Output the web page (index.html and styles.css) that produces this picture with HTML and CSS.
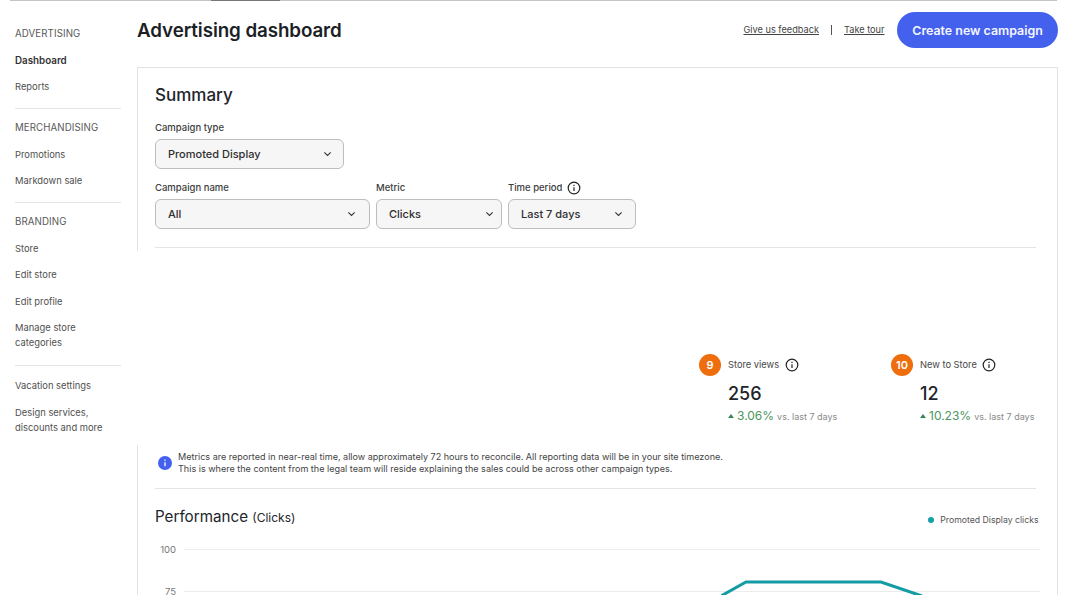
FILE: index.html
```html
<!DOCTYPE html>
<html lang="en">
<head>
<meta charset="utf-8">
<title>Advertising dashboard</title>
<link rel="stylesheet" href="styles.css">
</head>
<body>
<div class="topline"><span class="topline-thumb"></span></div>
<div class="page">
  <nav class="sidebar">
    <div class="nav-group">
      <div class="nav-head">ADVERTISING</div>
      <a class="nav-item nav-current">Dashboard</a>
      <a class="nav-item">Reports</a>
    </div>
    <div class="nav-group">
      <div class="nav-head">MERCHANDISING</div>
      <a class="nav-item">Promotions</a>
      <a class="nav-item">Markdown sale</a>
    </div>
    <div class="nav-group nav-branding">
      <div class="nav-head">BRANDING</div>
      <a class="nav-item">Store</a>
      <a class="nav-item">Edit store</a>
      <a class="nav-item">Edit profile</a>
      <a class="nav-item">Manage store<br>categories</a>
    </div>
    <div class="nav-group nav-last">
      <a class="nav-item">Vacation settings</a>
      <a class="nav-item">Design services,<br>discounts and more</a>
    </div>
  </nav>
  <main class="main">
    <header class="header">
      <h1 class="title">Advertising dashboard</h1>
      <div class="actions">
        <a class="link">Give us feedback</a>
        <span class="sep"></span>
        <a class="link">Take tour</a>
        <button class="cta">Create new campaign</button>
      </div>
    </header>
    <section class="card">
      <span class="border-gap"></span>
      <h2 class="summary">Summary</h2>
      <div class="field field-type">
        <label class="label">Campaign type</label>
        <div class="select select-type">Promoted Display<svg class="chev" viewBox="0 0 10 6"><path d="M1.5 1.2 5 4.6l3.5-3.4"/></svg></div>
      </div>
      <div class="filters">
        <div class="field">
          <label class="label">Campaign name</label>
          <div class="select select-name">All<svg class="chev" viewBox="0 0 10 6"><path d="M1.5 1.2 5 4.6l3.5-3.4"/></svg></div>
        </div>
        <div class="field">
          <label class="label">Metric</label>
          <div class="select select-metric">Clicks<svg class="chev" viewBox="0 0 10 6"><path d="M1.5 1.2 5 4.6l3.5-3.4"/></svg></div>
        </div>
        <div class="field">
          <label class="label">Time period<svg class="info" viewBox="0 0 14 14"><circle cx="7" cy="7" r="5.8"/><path d="M7 6.3v3.6M7 3.8v1.1"/></svg></label>
          <div class="select select-time">Last 7 days<svg class="chev" viewBox="0 0 10 6"><path d="M1.5 1.2 5 4.6l3.5-3.4"/></svg></div>
        </div>
      </div>
      <hr class="rule rule-filters">
      <div class="stats">
        <div class="stat">
          <span class="badge">9</span>
          <div class="stat-body">
            <div class="stat-label">Store views<svg class="info" viewBox="0 0 14 14"><circle cx="7" cy="7" r="5.8"/><path d="M7 6.3v3.6M7 3.8v1.1"/></svg></div>
            <div class="stat-value">256</div>
            <div class="stat-trend"><span class="arrow"></span><span class="pct">3.06%</span><span class="vs">vs. last 7 days</span></div>
          </div>
        </div>
        <div class="stat">
          <span class="badge">10</span>
          <div class="stat-body">
            <div class="stat-label">New to Store<svg class="info" viewBox="0 0 14 14"><circle cx="7" cy="7" r="5.8"/><path d="M7 6.3v3.6M7 3.8v1.1"/></svg></div>
            <div class="stat-value">12</div>
            <div class="stat-trend"><span class="arrow"></span><span class="pct">10.23%</span><span class="vs">vs. last 7 days</span></div>
          </div>
        </div>
      </div>
      <div class="notice">
        <svg class="notice-icon" viewBox="0 0 14 14"><circle cx="7" cy="7" r="7"/><path d="M7 6.2v4M7 3.4v1.3"/></svg>
        <p class="notice-text">Metrics are reported in near-real time, allow approximately 72 hours to reconcile. All reporting data will be in your site timezone.<br>This is where the content from the legal team will reside explaining the sales could be across other campaign types.</p>
      </div>
      <hr class="rule rule-notice">
      <div class="perf-head">
        <h2 class="perf-title">Performance <span class="perf-sub">(Clicks)</span></h2>
        <div class="legend"><span class="legend-dot"></span>Promoted Display clicks</div>
      </div>
      <div class="chart">
        <div class="axis-row"><span class="tick">100</span><span class="grid"></span></div>
        <div class="axis-row"><span class="tick">75</span><span class="grid"></span></div>
        <svg class="line" viewBox="0 0 320 30"><path d="M0 21 25 7H160L201 21"/></svg>
      </div>
    </section>
  </main>
</div>
</body>
</html>
```
FILE: styles.css
```css
* { box-sizing: border-box; }
html, body { margin: 0; height: 595px; overflow: hidden; background: #fff; }
body { font-family: Inter, "Liberation Sans", sans-serif; color: #191919; position: relative; }

.topline { position: absolute; top: 0; left: 10px; width: 1047px; height: 1px; background: #c4c4c4; }
.topline-thumb { position: absolute; left: 201px; width: 69px; height: 1px; background: #777; }

.page { display: flex; align-items: flex-start; }

.sidebar { width: 137px; flex: none; padding: 26.2px 16px 0 15px; font-size: 9.4px; line-height: 15px; color: #505050; }
.nav-group { display: flex; flex-direction: column; gap: 11.5px; padding-bottom: 13.5px; margin-bottom: 11.5px; border-bottom: 1.5px solid #e5e5e5; }
.nav-branding { padding-bottom: 15px; }
.nav-last { border-bottom: 0; gap: 12px; }
.nav-head { font-size: 9.7px; letter-spacing: .1px; color: #595959; }
.nav-current { font-size: 9.8px; font-weight: 600; color: #333; }

.main { width: 921px; flex: none; }
.header { height: 67px; display: flex; justify-content: space-between; align-items: flex-start; }
.title { margin: 19px 0 0; font-size: 18.8px; line-height: 24px; font-weight: 600; letter-spacing: -.1px; color: #1c1f26; }
.actions { display: flex; align-items: center; margin: 12px 0 0 0; }
.link { font-size: 9.2px; line-height: 14px; color: #444; text-decoration: underline; }
.sep { width: 1px; height: 10px; background: #555; margin: 0 12px; }
.cta { width: 161px; height: 36px; margin-left: 12.5px; border: 0; border-radius: 18px; background: #4461ee; color: #f4f6ff; font: 600 12.4px Inter, "Liberation Sans", sans-serif; padding: 0; }

.card { position: relative; height: 640px; border: 1.5px solid #e2e2e2; border-bottom: 0; padding: 0 21.5px 0 17px; }
.border-gap { position: absolute; left: -2px; top: 183px; width: 3px; height: 194px; background: #fff; }
.summary { margin: 16px 0 0; font-size: 17px; line-height: 22px; font-weight: 500; color: #22252b; }

.field { display: flex; flex-direction: column; }
.field-type { margin-top: 14.5px; }
.label { display: flex; align-items: center; height: 14px; font-size: 9.5px; font-weight: 500; color: #3d3d3d; margin-bottom: 4px; }
.select { display: flex; align-items: center; justify-content: space-between; height: 30.5px; padding: 0 11.5px 0 12px; font-size: 11px; font-weight: 500; color: #2f2f2f; background: #f6f6f6; border: 1.5px solid #bdbdbd; border-radius: 6px; }
.select-type { width: 189px; }
.select-name { width: 215px; padding-right: 13.5px; }
.select-metric { width: 126px; padding-right: 7.5px; }
.select-time { width: 128px; padding-right: 12px; }
.chev { width: 9px; height: 6px; fill: none; stroke: #333; stroke-width: 1.2; }
.filters { display: flex; gap: 6px; margin-top: 11.5px; }
.info { width: 14px; height: 14px; margin-left: 5.5px; fill: none; stroke: #222; stroke-width: 1.2; }
.label .info { margin-left: 5px; }

.rule { margin: 0; height: 0; border: 0; border-top: 1.5px solid #e4e4e4; }
.rule-filters { margin-top: 17.5px; }
.rule-notice { margin-top: 12px; }

.stats { display: flex; margin: 105px 0 0 544px; height: 97px; }
.stat { display: flex; gap: 7px; flex: none; width: 192px; }
.stat:last-child { width: auto; }
.badge { width: 22px; height: 22px; flex: none; border-radius: 50%; background: #ee6d0d; color: #fff; font-size: 11px; font-weight: 600; display: flex; align-items: center; justify-content: center; margin-top: 1px; }
.stat-label { display: flex; align-items: center; height: 22px; font-size: 9.3px; color: #484848; margin-top: 1px; white-space: nowrap; }
.stat-value { font-size: 18px; line-height: 24px; font-weight: 500; color: #22252b; margin-top: 6px; }
.stat-trend { display: flex; align-items: baseline; white-space: nowrap; line-height: 20px; }
.arrow { width: 0; height: 0; border: 3.5px solid transparent; border-top: 0; border-bottom: 4px solid #3c8552; margin: 0 3px 1px 0; align-self: center; }
.pct { font-size: 12px; color: #4c9560; }
.vs { font-size: 9px; color: #8a8a8a; margin-left: 3px; }

.notice { display: flex; align-items: center; gap: 6px; margin: 0 0 0 3px; height: 26px; }
.notice-icon { width: 14px; height: 14px; flex: none; fill: #4461ee; stroke: #fff; stroke-width: 1.3; }
.notice-icon circle { stroke: none; }
.notice-text { margin: 0; font-size: 9.05px; line-height: 12px; color: #444; white-space: nowrap; }

.perf-head { display: flex; justify-content: space-between; align-items: center; margin: 16px -3px 0 0; height: 24px; }
.perf-title { margin: 0; font-size: 15.2px; font-weight: 400; color: #22252b; }
.perf-sub { font-size: 12px; }
.legend { display: flex; align-items: center; gap: 6px; font-size: 8.7px; color: #555; margin-top: 7px; }
.legend-dot { width: 6px; height: 6px; border-radius: 50%; background: #12a0a8; }

.chart { position: relative; margin: 0 -4px 0 0; }
.axis-row { display: flex; align-items: center; height: 42px; }
.tick { width: 21px; margin-right: 8px; text-align: right; font-size: 9.5px; color: #777; }
.grid { flex: 1; height: 1px; background: #ececec; }
.line { position: absolute; left: 566px; top: 46px; width: 320px; height: 30px; fill: none; stroke: #149ca5; stroke-width: 3; }
```
